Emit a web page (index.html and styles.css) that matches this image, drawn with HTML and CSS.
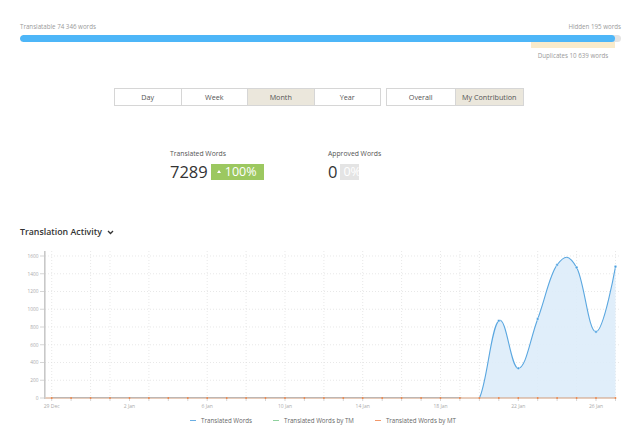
FILE: index.html
```html
<!DOCTYPE html>
<html>
<head>
<meta charset="utf-8">
<link rel="stylesheet" href="styles.css">
</head>
<body>
<div class="summary">
  <div class="meta">
    <span>Translatable 74 346 words</span>
    <span>Hidden 195 words</span>
  </div>
  <div class="bar"><div class="bar-fill"></div></div>
  <div class="dup-wrap">
    <div class="dup">
      <div class="dup-bar"></div>
      <div class="dup-label">Duplicates 10 639 words</div>
    </div>
  </div>
</div>

<div class="tabs">
  <div class="group period">
    <div class="btn">Day</div>
    <div class="btn">Week</div>
    <div class="btn active">Month</div>
    <div class="btn">Year</div>
  </div>
  <div class="group scope">
    <div class="btn">Overall</div>
    <div class="btn active">My Contribution</div>
  </div>
</div>

<div class="stats">
  <div class="stat first">
    <div class="stat-label">Translated Words</div>
    <div class="stat-row">
      <span class="stat-num">7289</span>
      <span class="badge green"><span class="tri"></span>100%</span>
    </div>
  </div>
  <div class="stat">
    <div class="stat-label">Approved Words</div>
    <div class="stat-row">
      <span class="stat-num">0</span>
      <span class="badge gray">0%</span>
    </div>
  </div>
</div>

<div class="activity-title">
  <span>Translation Activity</span>
  <svg class="chev" width="7" height="5" viewBox="0 0 7 5"><path d="M1 1 L3.5 3.5 L6 1" fill="none" stroke="#333" stroke-width="1.3"/></svg>
</div>

<svg class="chart" width="640" height="168" viewBox="0 0 640 168">
  <defs>
    <clipPath id="plot"><rect x="44" y="0" width="580" height="152"/></clipPath>
  </defs>
  <g class="grid" stroke="#dedede" stroke-width="0.7" stroke-dasharray="1 2">
    <line x1="45" y1="10" x2="620" y2="10"/>
    <line x1="45" y1="27.75" x2="620" y2="27.75"/>
    <line x1="45" y1="45.5" x2="620" y2="45.5"/>
    <line x1="45" y1="63.25" x2="620" y2="63.25"/>
    <line x1="45" y1="81" x2="620" y2="81"/>
    <line x1="45" y1="98.75" x2="620" y2="98.75"/>
    <line x1="45" y1="116.5" x2="620" y2="116.5"/>
    <line x1="45" y1="134.25" x2="620" y2="134.25"/>
    <line x1="51.7" y1="5" x2="51.7" y2="152"/>
    <line x1="90.6" y1="5" x2="90.6" y2="152"/>
    <line x1="110" y1="5" x2="110" y2="152"/>
    <line x1="148.9" y1="5" x2="148.9" y2="152"/>
    <line x1="207.2" y1="5" x2="207.2" y2="152"/>
    <line x1="246.1" y1="5" x2="246.1" y2="152"/>
    <line x1="285" y1="5" x2="285" y2="152"/>
    <line x1="323.9" y1="5" x2="323.9" y2="152"/>
    <line x1="362.7" y1="5" x2="362.7" y2="152"/>
    <line x1="401.6" y1="5" x2="401.6" y2="152"/>
    <line x1="440.5" y1="5" x2="440.5" y2="152"/>
    <line x1="460" y1="5" x2="460" y2="152"/>
    <line x1="479.4" y1="5" x2="479.4" y2="152"/>
    <line x1="537.7" y1="5" x2="537.7" y2="152"/>
    <line x1="576.6" y1="5" x2="576.6" y2="152"/>
    <line x1="615.5" y1="5" x2="615.5" y2="152"/>
  </g>
  <g class="ylabels" font-size="4.8" fill="#aaa" text-anchor="end">
    <text x="38.5" y="11.7">1600</text>
    <text x="38.5" y="29.5">1400</text>
    <text x="38.5" y="47.2">1200</text>
    <text x="38.5" y="65">1000</text>
    <text x="38.5" y="82.7">800</text>
    <text x="38.5" y="100.5">600</text>
    <text x="38.5" y="118.2">400</text>
    <text x="38.5" y="136">200</text>
    <text x="38.5" y="153.7">0</text>
  </g>
  <g stroke="#bbb" stroke-width="0.6">
    <line x1="40" y1="10" x2="44" y2="10"/>
    <line x1="40" y1="27.75" x2="44" y2="27.75"/>
    <line x1="40" y1="45.5" x2="44" y2="45.5"/>
    <line x1="40" y1="63.25" x2="44" y2="63.25"/>
    <line x1="40" y1="81" x2="44" y2="81"/>
    <line x1="40" y1="98.75" x2="44" y2="98.75"/>
    <line x1="40" y1="116.5" x2="44" y2="116.5"/>
    <line x1="40" y1="134.25" x2="44" y2="134.25"/>
    <line x1="40" y1="152" x2="44" y2="152"/>
  </g>
  <line x1="44.8" y1="5" x2="44.8" y2="153" stroke="#c8c8c8" stroke-width="1.6"/>
  <g clip-path="url(#plot)">
    <path fill="#ddecf9" fill-opacity="0.9" d="M51.7 152 L460 152 C467.78 152 471.62 167.44 479.4 152 C487.18 136.56 491.02 80.74 498.8 74.8 C506.58 68.86 510.52 122.66 518.3 122.3 C526.08 121.94 529.92 93.68 537.7 73 C545.48 52.32 549.32 29.2 557.1 18.9 C564.88 8.6 568.82 8.1 576.6 21.5 C584.38 34.9 588.22 86.06 596 85.9 C603.78 85.74 615.5 20.7 615.5 20.7 L615.5 152 Z"/>
    <path fill="none" stroke="#5aa7e0" stroke-width="1.1" d="M51.7 152 L460 152 C467.78 152 471.62 167.44 479.4 152 C487.18 136.56 491.02 80.74 498.8 74.8 C506.58 68.86 510.52 122.66 518.3 122.3 C526.08 121.94 529.92 93.68 537.7 73 C545.48 52.32 549.32 29.2 557.1 18.9 C564.88 8.6 568.82 8.1 576.6 21.5 C584.38 34.9 588.22 86.06 596 85.9 C603.78 85.74 615.5 20.7 615.5 20.7"/>
  </g>
  <g class="xticks" stroke="#bbb" stroke-width="0.6">
    <path d="M51.7 152v3M71.1 152v3M90.6 152v3M110 152v3M129.5 152v3M148.9 152v3M168.3 152v3M187.8 152v3M207.2 152v3M226.7 152v3M246.1 152v3M265.5 152v3M285 152v3M304.4 152v3M323.9 152v3M343.3 152v3M362.7 152v3M382.2 152v3M401.6 152v3M421.1 152v3M440.5 152v3M459.9 152v3M479.4 152v3M498.8 152v3M518.3 152v3M537.7 152v3M557.1 152v3M576.6 152v3M596 152v3M615.5 152v3"/>
  </g>
  <line x1="45.5" y1="152" x2="615.5" y2="152" stroke="#cf9a78" stroke-width="1"/>
  <g fill="#f0874a">
    <circle cx="51.7" cy="152" r="0.9"/><circle cx="71.1" cy="152" r="0.9"/><circle cx="90.6" cy="152" r="0.9"/><circle cx="110" cy="152" r="0.9"/><circle cx="129.5" cy="152" r="0.9"/><circle cx="148.9" cy="152" r="0.9"/><circle cx="168.3" cy="152" r="0.9"/><circle cx="187.8" cy="152" r="0.9"/><circle cx="207.2" cy="152" r="0.9"/><circle cx="226.7" cy="152" r="0.9"/><circle cx="246.1" cy="152" r="0.9"/><circle cx="265.5" cy="152" r="0.9"/><circle cx="285" cy="152" r="0.9"/><circle cx="304.4" cy="152" r="0.9"/><circle cx="323.9" cy="152" r="0.9"/><circle cx="343.3" cy="152" r="0.9"/><circle cx="362.7" cy="152" r="0.9"/><circle cx="382.2" cy="152" r="0.9"/><circle cx="401.6" cy="152" r="0.9"/><circle cx="421.1" cy="152" r="0.9"/><circle cx="440.5" cy="152" r="0.9"/><circle cx="459.9" cy="152" r="0.9"/><circle cx="479.4" cy="152" r="0.9"/><circle cx="498.8" cy="152" r="0.9"/><circle cx="518.3" cy="152" r="0.9"/><circle cx="537.7" cy="152" r="0.9"/><circle cx="557.1" cy="152" r="0.9"/><circle cx="576.6" cy="152" r="0.9"/><circle cx="596" cy="152" r="0.9"/><circle cx="615.5" cy="152" r="0.9"/>
  </g>
  <g fill="#4a9fdf" stroke="#fff" stroke-width="0.5">
    <circle cx="498.8" cy="74.8" r="1.4"/>
    <circle cx="518.3" cy="122.3" r="1.4"/>
    <circle cx="537.7" cy="73" r="1.4"/>
    <circle cx="557.1" cy="18.9" r="1.4"/>
    <circle cx="576.6" cy="21.5" r="1.4"/>
    <circle cx="596" cy="85.9" r="1.4"/>
    <circle cx="615.5" cy="20.7" r="1.4"/>
  </g>
  <g class="xlabels" font-size="5" fill="#aaa" text-anchor="middle">
    <text x="51.7" y="162">29 Dec</text>
    <text x="129.5" y="162">2 Jan</text>
    <text x="207.2" y="162">6 Jan</text>
    <text x="285" y="162">10 Jan</text>
    <text x="362.7" y="162">14 Jan</text>
    <text x="440.5" y="162">18 Jan</text>
    <text x="518.3" y="162">22 Jan</text>
    <text x="596" y="162">26 Jan</text>
  </g>
</svg>

<div class="legend">
  <div class="item"><span class="sym blue"></span>Translated Words</div>
  <div class="item"><span class="sym green"></span>Translated Words by TM</div>
  <div class="item"><span class="sym orange"></span>Translated Words by MT</div>
</div>
</body>
</html>
```

FILE: styles.css
```css
html, body {
  margin: 0;
  padding: 0;
  background: #fff;
}
body {
  width: 640px;
  height: 432px;
  overflow: hidden;
  font-family: "Open Sans", "DejaVu Sans", sans-serif;
  color: #333;
}
.summary {
  padding: 23px 19px 0 20px;
}
.meta {
  display: flex;
  justify-content: space-between;
  font-size: 6.2px;
  line-height: 8px;
  color: #9a9a9a;
}
.bar {
  margin-top: 4px;
  height: 6.5px;
  background: #e4e4e4;
  border-radius: 3.5px;
  overflow: hidden;
}
.bar-fill {
  width: 99%;
  height: 100%;
  background: #4db6f8;
  border-radius: 3.5px;
}
.dup-wrap {
  display: flex;
  justify-content: flex-end;
  padding-right: 6px;
}
.dup {
  width: 84px;
  display: flex;
  flex-direction: column;
  align-items: center;
}
.dup-bar {
  width: 100%;
  height: 5.5px;
  margin-top: 0.5px;
  background: #f9ebcb;
}
.dup-label {
  margin-top: 4px;
  font-size: 6.2px;
  line-height: 8px;
  color: #999;
  white-space: nowrap;
}
.tabs {
  display: flex;
  justify-content: center;
  gap: 5px;
  margin-top: 28px;
  padding-right: 2px;
}
.group {
  display: flex;
  border: 1px solid #d6d6d6;
}
.btn {
  height: 16px;
  line-height: 16px;
  text-align: center;
  font-size: 7.2px;
  color: #555;
  border-left: 1px solid #d6d6d6;
  background: #fff;
}
.btn:first-child {
  border-left: none;
}
.period .btn {
  width: 65.5px;
}
.scope .btn {
  width: 67.5px;
}
.btn.active {
  background: #ebe7dc;
  color: #555;
}
.stats {
  display: flex;
  padding-left: 170px;
  margin-top: 43px;
}
.stat.first {
  width: 158px;
}
.stat-label {
  font-size: 6.8px;
  line-height: 9px;
  color: #555;
}
.stat-row {
  display: flex;
  align-items: center;
  margin-top: 6px;
  height: 16px;
}
.stat-num {
  font-size: 16.5px;
  line-height: 16px;
  color: #333;
  margin-right: 3px;
}
.badge {
  height: 16px;
  line-height: 16px;
  font-size: 12.5px;
  color: #fff;
  padding: 0 3px;
  display: inline-flex;
  align-items: center;
}
.badge.green {
  background: #9cc860;
  width: 47px;
  padding: 0 3px;
}
.badge.gray {
  background: #e4e4e4;
  width: 13px;
}
.tri {
  display: inline-block;
  width: 0;
  height: 0;
  border-left: 2px solid transparent;
  border-right: 2px solid transparent;
  border-bottom: 3px solid #fff;
  margin: 0 4px 0 3px;
}
.activity-title {
  display: flex;
  align-items: center;
  gap: 5px;
  margin-top: 46px;
  padding-left: 20px;
  font-size: 8.8px;
  font-weight: 600;
  line-height: 12px;
  color: #333;
}
.chev {
  display: block;
  margin-top: 1px;
}
.chart {
  display: block;
  margin-top: 8px;
  font-family: "Open Sans", "DejaVu Sans", sans-serif;
}
.legend {
  display: flex;
  justify-content: center;
  gap: 21px;
  padding-left: 6px;
  margin-top: 3px;
  font-size: 6.2px;
  line-height: 8px;
  color: #666;
}
.item {
  display: flex;
  align-items: center;
}
.sym {
  display: inline-block;
  width: 6px;
  height: 1.5px;
  margin-right: 5px;
}
.sym.blue { background: #6aaee3; }
.sym.green { background: #8fd19e; }
.sym.orange { background: #f2986a; }
```
